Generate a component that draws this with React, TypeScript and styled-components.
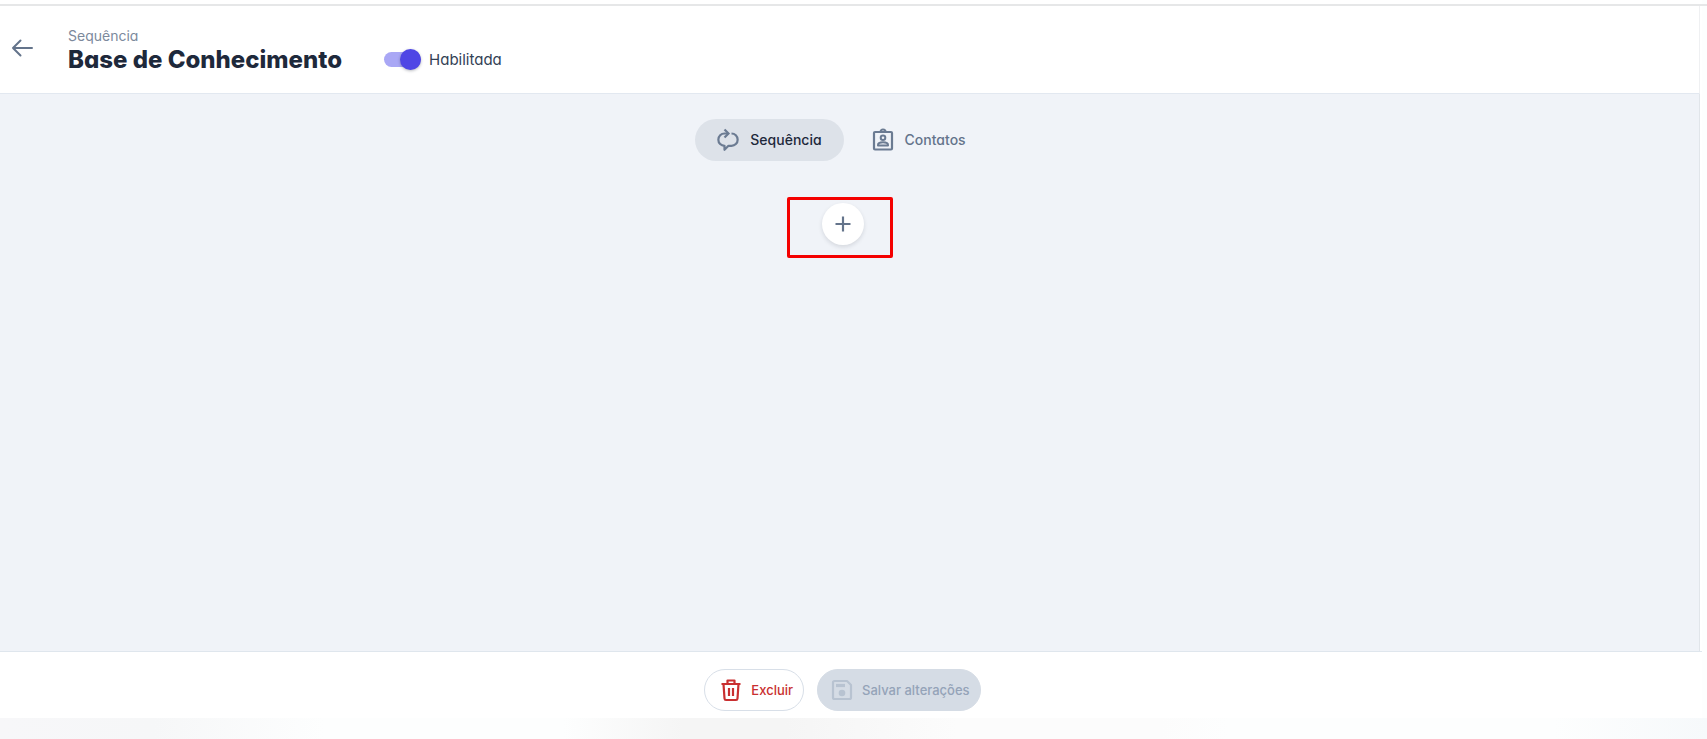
import React, { useState } from "react";
import styled, { createGlobalStyle } from "styled-components";

const GlobalStyle = createGlobalStyle`
  *, *::before, *::after { box-sizing: border-box; }
  body {
    margin: 0;
    background: #fdfefe;
    color: #1e293b;
    font-family: Inter, "Liberation Sans", sans-serif;
    font-feature-settings: "cv11";
    font-size: 14px;
    line-height: 20px;
  }
`;

const Shell = styled.div`
  min-height: 100vh;
  display: flex;
  flex-direction: column;
`;

const Page = styled.div`
  flex: 1;
  display: flex;
  flex-direction: column;
  margin-right: 5px;
  background: #ffffff;
`;

const TopEdge = styled.div`
  height: 6px;
  margin-right: -5px;
  border-bottom: 2px solid #e6e7e8;
`;

const Header = styled.header`
  display: flex;
  align-items: center;
  min-height: 88px;
  margin-right: 2px;
  padding: 0 10px;
  border-right: 1px solid #eff0f2;
  border-bottom: 1px solid #e2e8f0;
`;

const BackLink = styled.a`
  display: flex;
  width: 24px;
  height: 24px;
  margin-bottom: 4px;
  color: #64748b;
`;

const Heading = styled.div`
  margin-left: 34px;
`;

const Eyebrow = styled.div`
  color: #7c899c;
`;

const TitleRow = styled.div`
  display: flex;
  align-items: center;
  gap: 42px;
`;

const Title = styled.h1`
  margin: 0;
  font-size: 24px;
  font-weight: 800;
  line-height: 28px;
`;

const ToggleLabel = styled.label`
  display: flex;
  align-items: center;
  gap: 8px;
  color: #334155;
  font-size: 15px;
  cursor: pointer;
`;

const Toggle = styled.input`
  appearance: none;
  display: flex;
  align-items: center;
  width: 37px;
  height: 15px;
  margin: 0;
  border-radius: 8px;
  background: #a9a7f5;
  cursor: pointer;

  &::before {
    content: "";
    width: 21px;
    height: 21px;
    flex: none;
    border-radius: 50%;
    background: #4f46e5;
    box-shadow: 0 1px 3px rgba(15, 23, 42, 0.3);
  }
  &:checked { justify-content: flex-end; }
  &:not(:checked) { background: #cbd5e1; }
`;

const Canvas = styled.main`
  flex: 1;
  display: flex;
  flex-direction: column;
  align-items: center;
  gap: 36px;
  margin-right: 2px;
  padding: 25px 0 24px;
  border-right: 1px solid #e1e5ea;
  background: #f0f3f8;
`;

const Tabs = styled.nav`
  display: flex;
  gap: 6px;
  margin-right: 16px;
`;

const Tab = styled.button<{ $active?: boolean }>`
  display: flex;
  align-items: center;
  gap: 10px;
  height: 42px;
  padding: 0 22px 0 21px;
  border: 0;
  border-radius: 21px;
  background: ${(p) => (p.$active ? "#dde2e9" : "transparent")};
  color: ${(p) => (p.$active ? "#1e293b" : "#64748b")};
  font: inherit;
  font-weight: 500;
  cursor: pointer;

  svg { color: #6b7b92; }
`;

const Highlight = styled.div`
  display: flex;
  justify-content: center;
  width: 106px;
  height: 61px;
  margin-right: 20px;
  padding: 3px 0 0 6px;
  border: 3px solid #f40000;
  border-radius: 2px;
`;

const AddButton = styled.button`
  display: grid;
  place-items: center;
  width: 42px;
  height: 42px;
  padding: 0;
  border: 0;
  border-radius: 50%;
  background: #ffffff;
  color: #64748b;
  box-shadow: 0 2px 4px rgba(15, 23, 42, 0.12);
  cursor: pointer;
`;

const Footer = styled.footer`
  display: flex;
  align-items: center;
  justify-content: center;
  gap: 13px;
  min-height: 67px;
  padding: 10px 17px 0 0;
  border-top: 1px solid #dfe6ed;
`;

const ActionButton = styled.button<{ $danger?: boolean }>`
  display: flex;
  align-items: center;
  gap: 8px;
  height: 42px;
  padding: 0 10px 0 ${(p) => (p.$danger ? 14 : 12)}px;
  border: 1px solid ${(p) => (p.$danger ? "#d8dfe8" : "#d5dce5")};
  border-radius: 21px;
  background: ${(p) => (p.$danger ? "#ffffff" : "#d5dce5")};
  color: ${(p) => (p.$danger ? "#c92f30" : "#94a3b8")};
  font: 500 13px/20px Inter, "Liberation Sans", sans-serif;
  font-feature-settings: normal;

  svg { color: ${(p) => (p.$danger ? "#c92f30" : "#b8c3d1")}; }
`;

const BottomStrip = styled.div`
  height: 21px;
  background: linear-gradient(90deg, #f7f7f9 0%, #f6f7f8 9%, #fdfefe 19%, #fdfefe 33%, #f5f5f5 40%, #f5f5f5 46%, #fcfcfc 56%, #fcfcfc 68%, #fdfefe 72%, #fdfefe 91%, #f6f9fb 100%);
`;

const Icon = ({ size = 24, children }: { size?: number; children: React.ReactNode }) => (
  <svg width={size} height={size} viewBox="0 0 24 24" fill="none" stroke="currentColor" strokeWidth="2.2" strokeLinejoin="round" aria-hidden="true">
    {children}
  </svg>
);

export default function App() {
  const [enabled, setEnabled] = useState(true);
  const [tab, setTab] = useState("sequence");
  return (
    <Shell>
      <GlobalStyle />
      <Page>
        <TopEdge />
        <Header>
          <BackLink href="#voltar" aria-label="Voltar">
            <Icon><path d="M22 12H3M10.5 4.5 3 12l7.5 7.5" strokeLinecap="round" strokeWidth="2" /></Icon>
          </BackLink>
          <Heading>
            <Eyebrow>Sequência</Eyebrow>
            <TitleRow>
              <Title>Base de Conhecimento</Title>
              <ToggleLabel>
                <Toggle type="checkbox" role="switch" checked={enabled} onChange={(e) => setEnabled(e.target.checked)} />
                Habilitada
              </ToggleLabel>
            </TitleRow>
          </Heading>
        </Header>
        <Canvas>
          <Tabs>
            <Tab type="button" $active={tab === "sequence"} onClick={() => setTab("sequence")}>
              <Icon>
                <path d="M12 5.5H8.5a6.15 6.15 0 0 0 0 12.3v4l4-4h3a6.15 6.15 0 0 0 0-12.3" />
                <path d="M8.5 1.5 12.5 5.5 8.5 9.5" strokeLinejoin="miter" />
              </Icon>
              Sequência
            </Tab>
            <Tab type="button" $active={tab === "contacts"} onClick={() => setTab("contacts")}>
              <Icon>
                <rect x="3" y="4" width="18" height="17.5" rx="1" />
                <path d="M9.5 4a2.5 2.5 0 0 1 5 0" />
                <circle cx="12" cy="9.7" r="2.3" strokeWidth="2" />
                <path d="M7 17.5v-.6c0-1.7 2.5-2.6 5-2.6s5 .9 5 2.6v.6z" strokeWidth="2" />
              </Icon>
              Contatos
            </Tab>
          </Tabs>
          <Highlight>
            <AddButton type="button" aria-label="Adicionar">
              <Icon size={20}><path d="M12 3v18M3 12h18" strokeWidth="2.6" /></Icon>
            </AddButton>
          </Highlight>
        </Canvas>
        <Footer>
          <ActionButton type="button" $danger>
            <Icon><path d="M2.5 6h19M8.5 6V2.5h7V6M4.5 6l1 14.5q.1 1.5 1.5 1.5h10q1.4 0 1.5-1.5l1-14.5M10 10v8M14 10v8" /></Icon>
            Excluir
          </ActionButton>
          <ActionButton type="button" disabled>
            <Icon>
              <path d="M4.5 3H17l4 4v12.5q0 1.500-1.5 1.5h-15Q3 21 3 19.5v-15Q3 3 4.5 3z" />
              <path d="M6 7.500h9" strokeWidth="3.2" />
              <circle cx="12" cy="15" r="3.300" fill="currentColor" stroke="none" />
            </Icon>
            Salvar alterações
          </ActionButton>
        </Footer>
      </Page>
      <BottomStrip />
    </Shell>
  );
}
